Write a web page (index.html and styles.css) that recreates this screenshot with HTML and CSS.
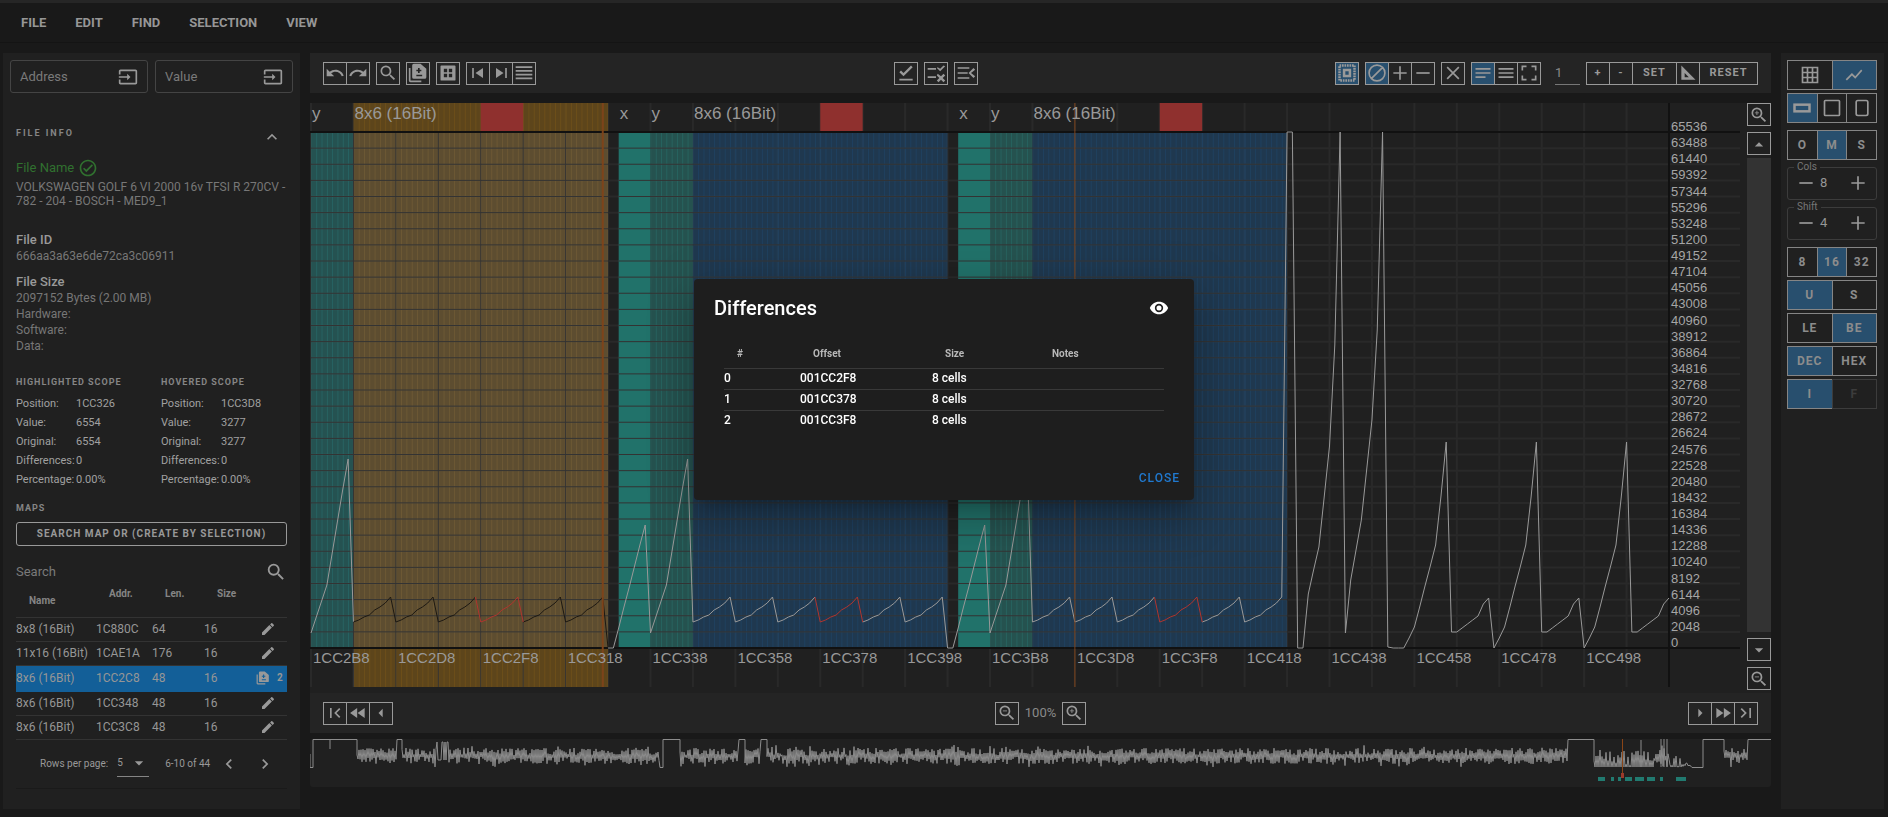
FILE: index.html
```
<!DOCTYPE html>
<html lang="en">
<head>
  <meta charset="UTF-8" />
  <meta name="viewport" content="width=device-width, initial-scale=1.0" />
  <title>Map Editor</title>
  <link rel="stylesheet" href="styles.css">
</head>
<body>
  <!-- Icon set -->
  <svg class="sprite" aria-hidden="true">
    <symbol id="i-input" viewBox="0 0 24 24"><path d="M21,3.01H3C1.89,3.01 1,3.9 1,5V9H3V4.99H21V19.03H3V15H1V19C1,20.1 1.89,21 3,21H21C22.1,21 23,20.11 23,19V5C23,3.9 22.1,3.01 21,3.01M11,16L15,12L11,8V11H1V13H11V16Z"/></symbol>
    <symbol id="i-check" viewBox="0 0 24 24"><path d="M12 2C6.5 2 2 6.5 2 12S6.5 22 12 22 22 17.5 22 12 17.5 2 12 2M12 20C7.59 20 4 16.41 4 12S7.59 4 12 4 20 7.59 20 12 16.41 20 12 20M16.59 7.58L10 14.17L7.41 11.59L6 13L10 17L18 9L16.59 7.58Z"/></symbol>
    <symbol id="i-up" viewBox="0 0 24 24"><path d="M7.41,15.41L12,10.83L16.59,15.41L18,14L12,8L6,14L7.41,15.41Z"/></symbol>
    <symbol id="i-left" viewBox="0 0 24 24"><path d="M15.41,16.58L10.83,12L15.41,7.41L14,6L8,12L14,18L15.41,16.58Z"/></symbol>
    <symbol id="i-right" viewBox="0 0 24 24"><path d="M8.59,16.58L13.17,12L8.59,7.41L10,6L16,12L10,18L8.59,16.58Z"/></symbol>
    <symbol id="i-search" viewBox="0 0 24 24"><path d="M9.5,3A6.5,6.5 0 0,1 16,9.5C16,11.11 15.41,12.59 14.44,13.73L14.71,14H15.5L20.5,19L19,20.5L14,15.5V14.71L13.73,14.44C12.59,15.41 11.11,16 9.5,16A6.5,6.5 0 0,1 3,9.5A6.5,6.5 0 0,1 9.5,3M9.5,5C7,5 5,7 5,9.5C5,12 7,14 9.5,14C12,14 14,12 14,9.5C14,7 12,5 9.5,5Z"/></symbol>
    <symbol id="i-zoomin" viewBox="0 0 24 24"><use href="#i-search"/><path d="M9,7H10V9H12V10H10V12H9V10H7V9H9V7Z"/></symbol>
    <symbol id="i-zoomout" viewBox="0 0 24 24"><use href="#i-search"/><path d="M7,9H12V10H7V9Z"/></symbol>
    <symbol id="i-pencil" viewBox="0 0 24 24"><path d="M20.71,7.04C21.1,6.65 21.1,6 20.71,5.63L18.37,3.29C18,2.9 17.35,2.9 16.96,3.29L15.12,5.12L18.87,8.87M3,17.25V21H6.75L17.81,9.93L14.06,6.18L3,17.25Z"/></symbol>
    <symbol id="i-copy" viewBox="0 0 24 24"><path fill-rule="evenodd" d="M1,6H3V21H16V23H3A2,2 0 0,1 1,21V6M7,1H15L22,7V17A2,2 0 0,1 20,19H7A2,2 0 0,1 5,17V3A2,2 0 0,1 7,1M12,6V8H10V10H12V12H14V10H16V8H14V6H12M10,14V16H17V14H10Z"/></symbol>
    <symbol id="i-undo" viewBox="0 0 24 24"><path d="M12.5,8C9.85,8 7.45,9 5.6,10.6L2,7V16H11L7.38,12.38C8.77,11.22 10.54,10.5 12.5,10.5C16.04,10.5 19.05,12.81 20.1,16L22.47,15.22C21.08,11.03 17.15,8 12.5,8Z"/></symbol>
    <symbol id="i-redo" viewBox="0 0 24 24"><path d="M18.4,10.6C16.55,9 14.15,8 11.5,8C6.85,8 2.92,11.03 1.54,15.22L3.9,16C4.95,12.81 7.95,10.5 11.5,10.5C13.45,10.5 15.23,11.22 16.62,12.38L13,16H22V7L18.4,10.6Z"/></symbol>
    <symbol id="i-table" viewBox="0 0 24 24"><path fill-rule="evenodd" d="M4,3H20A1,1 0 0,1 21,4V20A1,1 0 0,1 20,21H4A1,1 0 0,1 3,20V4A1,1 0 0,1 4,3M7,7V11H11V7H7M13,7V11H17V7H13M7,13V17H11V13H7M13,13V17H17V13H13Z"/></symbol>
    <symbol id="i-prev" viewBox="0 0 24 24"><path d="M5,18V6H7V18H5M9,12L18,6V18L9,12Z"/></symbol>
    <symbol id="i-next" viewBox="0 0 24 24"><path d="M17,18H19V6H17M6,18L15,12L6,6V18Z"/></symbol>
    <symbol id="i-lines" viewBox="0 0 24 24"><path d="M2,4H22V6H2M2,8.500H22V10.500H2M2,13H22V15H2M2,17.500H22V19.500H2Z"/></symbol>
    <symbol id="i-checkline" viewBox="0 0 24 24"><path d="M4,19H20V21H4M9,16L4,11L6,9L9,12L18,3L20,5Z"/></symbol>
    <symbol id="i-checkx" viewBox="0 0 24 24"><path d="M2,6H12V8H2M2,16H12V18H2M17,10L13,6L14,5L17,7L21,3L23,4M14,13L18,16L21,13L23,15L20,18L23,21L21,23L18,20L15,23L13,21L16,18L13,15Z"/></symbol>
    <symbol id="i-collapse" viewBox="0 0 24 24"><path d="M2,5H16V7H2M2,11H14V13H2M2,17H16V19H2M21,6L23,8L18,12L23,16L21,18L15,12Z"/></symbol>
    <symbol id="i-group" viewBox="0 0 24 24"><path fill="none" stroke="currentColor" stroke-width="3" stroke-dasharray="2 1" d="M3,3H21V21H3Z"/><path fill="none" stroke="currentColor" stroke-width="3" d="M8.500,8.500H15.500V15.500H8.500Z"/></symbol>
    <symbol id="i-block" viewBox="0 0 24 24"><path fill="none" stroke="currentColor" stroke-width="2" d="M12,2.500A9.500,9.500 0 1,1 12,21.500A9.500,9.500 0 1,1 12,2.500M5.500,18.500L18.500,5.500"/></symbol>
    <symbol id="i-plus" viewBox="0 0 24 24"><path d="M11,4H13V11H20V13H13V20H11V13H4V11H11Z"/></symbol>
    <symbol id="i-minus" viewBox="0 0 24 24"><path d="M4,11H20V13H4Z"/></symbol>
    <symbol id="i-close" viewBox="0 0 24 24"><path fill="none" stroke="currentColor" stroke-width="2" d="M5,5L19,19M19,5L5,19"/></symbol>
    <symbol id="i-menu" viewBox="0 0 24 24"><path d="M3,6H21V8H3V6M3,11H21V13H3V11M3,16H21V18H3V16Z"/></symbol>
    <symbol id="i-text" viewBox="0 0 24 24"><path d="M3,6H21V8H3V6M3,11H21V13H3V11M3,16H15V18H3V16Z"/></symbol>
    <symbol id="i-corners" viewBox="0 0 24 24"><path fill="none" stroke="currentColor" stroke-width="2" d="M4,9V4H9M15,4H20V9M20,15V20H15M9,20H4V15"/></symbol>
    <symbol id="i-square" viewBox="0 0 24 24"><path fill-rule="evenodd" d="M4,3L21,20H4M8,12V17H13Z"/></symbol>
    <symbol id="i-tri-up" viewBox="0 0 24 24"><path d="M7,15L12,10L17,15H7Z"/></symbol>
    <symbol id="i-tri-down" viewBox="0 0 24 24"><path d="M7,10L12,15L17,10H7Z"/></symbol>
    <symbol id="i-tri-left" viewBox="0 0 24 24"><path d="M14,7L9,12L14,17V7Z"/></symbol>
    <symbol id="i-tri-right" viewBox="0 0 24 24"><path d="M10,17L15,12L10,7V17Z"/></symbol>
    <symbol id="i-rewind" viewBox="0 0 24 24"><path d="M11.5,12L20,18V6M11,18V6L2.500,12L11,18Z"/></symbol>
    <symbol id="i-forward" viewBox="0 0 24 24"><path d="M13,6V18L21.500,12M4,18L12.500,12L4,6V18Z"/></symbol>
    <symbol id="i-first" viewBox="0 0 24 24"><path d="M18.410,16.590L13.820,12L18.410,7.410L17,6L11,12L17,18L18.410,16.590M6,6H8V18H6V6Z"/></symbol>
    <symbol id="i-last" viewBox="0 0 24 24"><path d="M5.590,7.410L10.180,12L5.590,16.590L7,18L13,12L7,6L5.590,7.410M16,6H18V18H16V6Z"/></symbol>
    <symbol id="i-grid" viewBox="0 0 24 24"><path fill="none" stroke="currentColor" stroke-width="2" d="M3,3H21V21H3ZM3,9H21M3,15H21M9,3V21M15,3V21"/></symbol>
    <symbol id="i-chart" viewBox="0 0 24 24"><path d="M3.500,18.500L9.500,12.500L13.500,16.500L22,6.920L20.590,5.500L13.500,13.500L9.500,9.500L2,17L3.500,18.500Z"/></symbol>
    <symbol id="i-wide" viewBox="0 0 24 24"><rect fill="none" stroke="currentColor" stroke-width="3" x="3" y="8" width="18" height="8"/></symbol>
    <symbol id="i-box" viewBox="0 0 24 24"><rect fill="none" stroke="currentColor" stroke-width="2" x="3" y="3" width="18" height="18" rx="1"/></symbol>
    <symbol id="i-tall" viewBox="0 0 24 24"><rect fill="none" stroke="currentColor" stroke-width="2" x="5" y="3" width="14" height="18" rx="2"/></symbol>
    <symbol id="i-eye" viewBox="0 0 24 24"><path d="M12,9A3,3 0 0,0 9,12A3,3 0 0,0 12,15A3,3 0 0,0 15,12A3,3 0 0,0 12,9M12,17A5,5 0 0,1 7,12A5,5 0 0,1 12,7A5,5 0 0,1 17,12A5,5 0 0,1 12,17M12,4.500C7,4.500 2.730,7.610 1,12C2.730,16.390 7,19.500 12,19.500C17,19.500 21.270,16.390 23,12C21.270,7.610 17,4.500 12,4.500Z"/></symbol>
  </svg>

  <nav class="menu">
    <button>FILE</button>
    <button>EDIT</button>
    <button>FIND</button>
    <button>SELECTION</button>
    <button>VIEW</button>
  </nav>

  <div class="app">
    <!-- Sidebar -->
    <aside class="sidebar">
      <div class="jump">
        <div class="jump-field"><input type="text" placeholder="Address" aria-label="Address"><button aria-label="Go to address"><svg class="icon"><use href="#i-input"/></svg></button></div>
        <div class="jump-field"><input type="text" placeholder="Value" aria-label="Value"><button aria-label="Go to value"><svg class="icon"><use href="#i-input"/></svg></button></div>
      </div>

      <div class="info-head">
        <h2>FILE INFO</h2>
        <button aria-label="Collapse"><svg class="icon"><use href="#i-up"/></svg></button>
      </div>
      <section class="info">
        <h3 class="verified">File Name <svg class="icon"><use href="#i-check"/></svg></h3>
        <p class="file-name">VOLKSWAGEN GOLF 6 VI 2000 16v TFSI R 270CV - 782 - 204 - BOSCH - MED9_1</p>
        <h3>File ID</h3>
        <p class="file-id">666aa3a63e6de72ca3c06911</p>
        <h3>File Size</h3>
        <p>2097152 Bytes (2.00 MB)</p>
        <p>Hardware:</p>
        <p>Software:</p>
        <p>Data:</p>
      </section>

      <div class="scopes">
        <section>
          <h2>HIGHLIGHTED SCOPE</h2>
          <dl>
            <dt>Position:</dt><dd>1CC326</dd>
            <dt>Value:</dt><dd>6554</dd>
            <dt>Original:</dt><dd>6554</dd>
            <dt>Differences:</dt><dd>0</dd>
            <dt>Percentage:</dt><dd>0.00%</dd>
          </dl>
        </section>
        <section>
          <h2>HOVERED SCOPE</h2>
          <dl>
            <dt>Position:</dt><dd>1CC3D8</dd>
            <dt>Value:</dt><dd>3277</dd>
            <dt>Original:</dt><dd>3277</dd>
            <dt>Differences:</dt><dd>0</dd>
            <dt>Percentage:</dt><dd>0.00%</dd>
          </dl>
        </section>
      </div>

      <section class="maps">
        <h2>MAPS</h2>
        <button class="map-search">SEARCH MAP OR (CREATE BY SELECTION)</button>
        <div class="search"><input type="text" placeholder="Search" aria-label="Search"><svg class="icon"><use href="#i-search"/></svg></div>
        <table class="map-table">
          <thead>
            <tr><th class="col-name">Name</th><th class="col-addr">Addr.</th><th class="col-len">Len.</th><th class="col-size">Size</th><th></th></tr>
          </thead>
          <tbody>
            <tr><td>8x8 (16Bit)</td><td>1C880C</td><td>64</td><td>16</td><td class="act"><svg class="icon"><use href="#i-pencil"/></svg></td></tr>
            <tr><td>11x16 (16Bit)</td><td>1CAE1A</td><td>176</td><td>16</td><td class="act"><svg class="icon"><use href="#i-pencil"/></svg></td></tr>
            <tr class="selected"><td>8x6 (16Bit)</td><td>1CC2C8</td><td>48</td><td>16</td><td class="act"><svg class="icon"><use href="#i-copy"/></svg><b>2</b></td></tr>
            <tr><td>8x6 (16Bit)</td><td>1CC348</td><td>48</td><td>16</td><td class="act"><svg class="icon"><use href="#i-pencil"/></svg></td></tr>
            <tr><td>8x6 (16Bit)</td><td>1CC3C8</td><td>48</td><td>16</td><td class="act"><svg class="icon"><use href="#i-pencil"/></svg></td></tr>
          </tbody>
        </table>
        <div class="pager">
          <label for="rows">Rows per page:</label>
          <div class="rows"><select id="rows"><option>5</option><option>10</option></select><svg class="icon"><use href="#i-tri-down"/></svg></div>
          <span class="range">6-10 of 44</span>
          <button aria-label="Previous page"><svg class="icon"><use href="#i-left"/></svg></button>
          <button aria-label="Next page"><svg class="icon"><use href="#i-right"/></svg></button>
        </div>
      </section>
    </aside>

    <!-- Editor -->
    <main class="editor">
      <div class="bar">
        <div class="tools">
          <div class="group"><button aria-label="Undo"><svg class="icon"><use href="#i-undo"/></svg></button><button aria-label="Redo"><svg class="icon"><use href="#i-redo"/></svg></button></div>
          <div class="group"><button aria-label="Find"><svg class="icon"><use href="#i-search"/></svg></button></div>
          <div class="group"><button aria-label="Copy map"><svg class="icon"><use href="#i-copy"/></svg></button></div>
          <div class="group"><button aria-label="Table"><svg class="icon"><use href="#i-table"/></svg></button></div>
          <div class="group"><button aria-label="Previous"><svg class="icon"><use href="#i-prev"/></svg></button><button aria-label="Next"><svg class="icon"><use href="#i-next"/></svg></button><button aria-label="List"><svg class="icon"><use href="#i-lines"/></svg></button></div>
        </div>
        <div class="tools">
          <div class="group"><button aria-label="Apply"><svg class="icon"><use href="#i-checkline"/></svg></button></div>
          <div class="group"><button aria-label="Differences"><svg class="icon"><use href="#i-checkx"/></svg></button></div>
          <div class="group"><button aria-label="Collapse"><svg class="icon"><use href="#i-collapse"/></svg></button></div>
        </div>
        <div class="tools">
          <div class="group"><button class="on" aria-label="Select group"><svg class="icon"><use href="#i-group"/></svg></button></div>
          <div class="group"><button class="on" aria-label="None"><svg class="icon"><use href="#i-block"/></svg></button><button aria-label="Add"><svg class="icon"><use href="#i-plus"/></svg></button><button aria-label="Subtract"><svg class="icon"><use href="#i-minus"/></svg></button></div>
          <div class="group"><button aria-label="Clear"><svg class="icon"><use href="#i-close"/></svg></button></div>
          <div class="group"><button class="on" aria-label="Align"><svg class="icon"><use href="#i-text"/></svg></button><button aria-label="Lines"><svg class="icon"><use href="#i-menu"/></svg></button><button aria-label="Full"><svg class="icon"><use href="#i-corners"/></svg></button></div>
          <input class="step" type="text" value="1" aria-label="Step">
          <div class="group"><button>+</button><button>-</button><button class="set">SET</button><button aria-label="Slope"><svg class="icon"><use href="#i-square"/></svg></button><button class="reset">RESET</button></div>
        </div>
      </div>

      <div class="view">
        <div class="chart" id="chart"></div>
        <div class="scroll">
          <button aria-label="Zoom in"><svg class="icon"><use href="#i-zoomin"/></svg></button>
          <button aria-label="Up"><svg class="icon"><use href="#i-tri-up"/></svg></button>
          <div class="track"></div>
          <button aria-label="Down"><svg class="icon"><use href="#i-tri-down"/></svg></button>
          <button aria-label="Zoom out"><svg class="icon"><use href="#i-zoomout"/></svg></button>
        </div>
      </div>

      <div class="bar">
        <div class="tools"><div class="group"><button aria-label="First"><svg class="icon"><use href="#i-first"/></svg></button><button aria-label="Rewind"><svg class="icon"><use href="#i-rewind"/></svg></button><button aria-label="Back"><svg class="icon"><use href="#i-tri-left"/></svg></button></div></div>
        <div class="tools zoom"><div class="group"><button aria-label="Zoom out"><svg class="icon"><use href="#i-zoomout"/></svg></button></div><span>100%</span><div class="group"><button aria-label="Zoom in"><svg class="icon"><use href="#i-zoomin"/></svg></button></div></div>
        <div class="tools"><div class="group"><button aria-label="Step forward"><svg class="icon"><use href="#i-tri-right"/></svg></button><button aria-label="Forward"><svg class="icon"><use href="#i-forward"/></svg></button><button aria-label="Last"><svg class="icon"><use href="#i-last"/></svg></button></div></div>
      </div>

      <div class="minimap" id="minimap"></div>
    </main>

    <!-- Display options -->
    <aside class="options">
      <div class="seg"><button aria-label="Grid"><svg class="icon"><use href="#i-grid"/></svg></button><button class="on" aria-label="Graph"><svg class="icon"><use href="#i-chart"/></svg></button></div>
      <div class="seg"><button class="on" aria-label="Wide"><svg class="icon"><use href="#i-wide"/></svg></button><button aria-label="Square"><svg class="icon"><use href="#i-box"/></svg></button><button aria-label="Tall"><svg class="icon"><use href="#i-tall"/></svg></button></div>
      <div class="seg spaced"><button>O</button><button class="on">M</button><button>S</button></div>
      <fieldset>
        <legend>Cols</legend>
        <button aria-label="Fewer columns"><svg class="icon"><use href="#i-minus"/></svg></button><span>8</span><button class="more" aria-label="More columns"><svg class="icon"><use href="#i-plus"/></svg></button>
      </fieldset>
      <fieldset>
        <legend>Shift</legend>
        <button aria-label="Shift left"><svg class="icon"><use href="#i-minus"/></svg></button><span>4</span><button class="more" aria-label="Shift right"><svg class="icon"><use href="#i-plus"/></svg></button>
      </fieldset>
      <div class="seg spaced"><button>8</button><button class="on">16</button><button>32</button></div>
      <div class="seg"><button class="on">U</button><button>S</button></div>
      <div class="seg"><button>LE</button><button class="on">BE</button></div>
      <div class="seg"><button class="on">DEC</button><button>HEX</button></div>
      <div class="seg"><button class="on">I</button><button disabled>F</button></div>
    </aside>
  </div>

  <!-- Differences dialog -->
  <div class="overlay">
    <div class="dialog" role="dialog" aria-labelledby="dlgTitle">
      <div class="dialog-head">
        <h1 id="dlgTitle">Differences</h1>
        <button aria-label="Show"><svg class="icon"><use href="#i-eye"/></svg></button>
      </div>
      <table class="diff-table">
        <thead>
          <tr><th class="col-n">#</th><th class="col-off">Offset</th><th class="col-cells">Size</th><th>Notes</th></tr>
        </thead>
        <tbody>
          <tr><td>0</td><td>001CC2F8</td><td>8 cells</td><td></td></tr>
          <tr><td>1</td><td>001CC378</td><td>8 cells</td><td></td></tr>
          <tr><td>2</td><td>001CC3F8</td><td>8 cells</td><td></td></tr>
        </tbody>
      </table>
      <div class="dialog-foot"><button>CLOSE</button></div>
    </div>
  </div>

  <script src="chart.js"></script>
</body>
</html>
```

FILE: styles.css
```
* { box-sizing: border-box; }
body { margin: 0; min-height: 100vh; display: flex; flex-direction: column; background: #191919; border-top: 3px solid #262626; color: #8a8a8a; font: 12px/16px Roboto, sans-serif; }
h1, h2, h3, p, dl, dd { margin: 0; }
button, input, select { font: inherit; color: inherit; background: none; border: 0; padding: 0; margin: 0; outline: 0; }
button { display: flex; align-items: center; justify-content: center; }
.sprite { position: absolute; width: 0; height: 0; }
.icon { width: 20px; height: 20px; fill: currentColor; color: #999; flex: none; display: block; }

.menu { display: flex; gap: 29px; height: 40px; padding: 0 21px; align-items: center; border-bottom: 1px solid #141414; }
.menu button { font-size: 13px; font-weight: 700; color: #969696; }
.app { flex: 1; display: flex; gap: 10px; padding: 10px 4px 8px 3px; }

/* sidebar */
.sidebar { width: 297px; flex: none; background: #202020; padding: 7px; }
.sidebar h2 { font-size: 9px; line-height: 12px; font-weight: 700; letter-spacing: 1px; color: #858585; }
.jump { display: flex; gap: 7px; }
.jump-field { flex: 1; min-width: 0; display: flex; align-items: center; height: 33px; border: 1px solid #444; border-radius: 3px; padding: 0 9px; }
.jump-field input { flex: 1; min-width: 0; font-size: 13px; }
input::placeholder { color: #7a7a7a; opacity: 1; }
.info-head { display: flex; justify-content: space-between; align-items: flex-start; height: 59px; padding: 34px 11px 0 6px; }
.sidebar .info-head h2 { letter-spacing: 2px; }
.info { padding: 6px 6px 0; color: #777; }
.info h3 { font-size: 13px; font-weight: 500; line-height: 16px; color: #999; }
.info .verified { display: flex; align-items: center; gap: 4px; font-weight: 400; line-height: 18px; color: #30702f; }
.verified .icon { color: #30702f; }
.info .file-name { line-height: 14px; padding: 2px 0 24px; }
.info .file-id { margin-bottom: 10px; }
.scopes { display: flex; padding: 22px 6px 0; }
.scopes section { width: 145px; flex: none; }
.scopes section + section { width: 126px; }
.scopes dl { display: grid; grid-template-columns: 60px 1fr; font-size: 11px; line-height: 19px; padding-top: 6px; color: #a0a0a0; }
.scopes dt { white-space: nowrap; }
.maps { margin: 13px 6px 0; }
.map-search { width: 100%; height: 24px; margin-top: 8px; border: 1px solid #999; border-radius: 3px; color: #999; font-size: 10px; font-weight: 700; letter-spacing: 1px; }
.search { display: flex; align-items: center; height: 40px; padding-top: 12px; }
.search input { flex: 1; min-width: 0; font-size: 13px; }
.search .icon { width: 22px; height: 22px; }
table { width: 100%; border-collapse: collapse; table-layout: fixed; }
th { text-align: left; font-size: 10px; line-height: 14px; font-weight: 700; padding: 0 0 0 13px; }
td { padding: 0; white-space: nowrap; }
.map-table { color: #969696; }
.map-table th { height: 31px; vertical-align: top; padding-top: 1px; color: #858585; border-bottom: 1px solid #333; }
.map-table .col-name { width: 80px; padding-top: 8px; }
.col-addr { width: 56px; }
.col-len { width: 52px; }
.col-size { width: 44px; }
.map-table td { height: 24px; border-bottom: 1px solid #333; }
.map-table .selected td { height: 26px; background: #135f98; border-color: #135f98; }
.map-table .act .icon { display: inline-block; width: 16px; height: 16px; margin-left: 12px; vertical-align: middle; }
.map-table .selected .act .icon { width: 14px; height: 14px; margin-left: 8px; }
.act b { font-size: 10px; margin-left: 7px; vertical-align: middle; }
.pager { display: flex; align-items: center; height: 49px; padding: 0 12px 0 24px; font-size: 10px; color: #999; border-bottom: 1px solid #1a1a1a; white-space: nowrap; }
.rows { display: flex; align-items: center; width: 32px; height: 27px; margin: 0 16px 0 9px; border-bottom: 1px solid #858585; }
.rows select { appearance: none; width: 12px; }
.range { flex: 1; }
.pager button + button { margin-left: 16px; }

/* editor */
.editor { flex: 1; min-width: 0; display: flex; flex-direction: column; margin-bottom: 22px; }
.bar { display: flex; justify-content: space-between; align-items: center; height: 40px; background: #242424; padding: 0 13px; }
.tools { display: flex; gap: 6px; align-items: center; }
.group { display: flex; }
.group button, .scroll button { width: 24px; height: 23px; border: 1px solid #999; color: #999; font-size: 11px; font-weight: 700; letter-spacing: 1px; }
.group button + button { margin-left: -1px; }
.group .set { width: 45px; }
.group .reset { width: 59px; }
.on { background: #284f6e; }
.step { width: 25px; height: 23px; margin-left: 8px; font-size: 13px; border-bottom: 1px solid #777; }
.zoom { font-size: 13px; }
.view { flex: 1; display: flex; gap: 7px; margin-top: 10px; background: #202020; }
.chart { flex: 1; min-width: 0; height: 590px; }
.scroll { display: flex; flex-direction: column; gap: 6px; padding-bottom: 3px; }
.track { flex: 1; background: #333; margin-top: -3px; }
.minimap { height: 48px; margin-top: 6px; background: #202020; border-radius: 3px; }
.chart svg, .minimap svg { display: block; font-family: "Liberation Sans", Arial, sans-serif; fill: #999; }
.map-label { font-size: 17px; }
.x-label { font-size: 15px; }
.y-label { font-size: 13px; fill: #a6a6a6; }
.grid { stroke: #292929; stroke-width: 2; fill: none; }
.grid-over { stroke: #333; stroke-width: 1; fill: none; }
.axis { stroke: #111; stroke-width: 2; fill: none; }
.trace { stroke: #999; stroke-width: 1; fill: none; }
.trace.dark { stroke: #1c1812; }
.trace.changed { stroke: #b0342e; }
.cursor { stroke: #7d431a; stroke-width: 1; }
.cursor.wide { stroke-width: 2; }
.overview { stroke: #8c8c8c; stroke-width: 1; fill: none; }

/* options */
.options { width: 103px; background: #202020; padding: 7px 7px 7px 6px; display: flex; flex-direction: column; gap: 3px; }
.seg { display: flex; height: 30px; }
.seg.spaced { margin-top: 4px; }
.seg button { flex: 1 1 0; border: 1px solid #858585; color: #8c8c8c; font-size: 12px; font-weight: 700; letter-spacing: 1px; }
.seg button + button { margin-left: -1px; }
.seg button:disabled { border-color: #3c3c3c; color: #3c3c3c; }
.options fieldset { display: flex; align-items: center; height: 37px; min-width: 0; margin: 0; padding: 2px 8px 0; border: 1px solid #3c3c3c; border-radius: 3px; color: #969696; font-size: 13px; }
.options legend { font-size: 10px; line-height: 8px; padding: 0 3px; margin-left: -2px; color: #777; }
.options .more { margin-left: auto; }
.options fieldset span { margin-left: 4px; }

/* dialog */
.overlay { position: fixed; inset: 0; display: flex; align-items: center; justify-content: center; }
.dialog { width: 500px; max-width: 100%; height: 221px; margin-bottom: 38px; display: flex; flex-direction: column; background: #1e1e1e; border-radius: 4px; color: #fff; box-shadow: 0 11px 15px -7px rgba(0,0,0,.2), 0 24px 38px 3px rgba(0,0,0,.14), 0 9px 46px 8px rgba(0,0,0,.12); }
.dialog-head { display: flex; justify-content: space-between; align-items: center; padding: 13px 25px 0 20px; }
.dialog h1 { font-size: 20px; line-height: 32px; font-weight: 500; }
.dialog-head .icon { color: #fff; }
.diff-table { width: auto; margin: 19px 30px 0; }
.diff-table th { height: 25px; vertical-align: top; padding-top: 4px; color: #b8b8b8; border-bottom: 1px solid #393939; }
.diff-table td { height: 21px; padding-bottom: 2px; font-weight: 500; }
.diff-table tr + tr td { border-top: 1px solid #393939; }
.col-n { width: 76px; }
.col-off { width: 132px; }
.col-cells { width: 107px; }
.dialog-foot { display: flex; justify-content: flex-end; margin-top: auto; padding: 0 14px 14px; }
.dialog-foot button { color: #2079cf; font-weight: 500; letter-spacing: 1px; }
```

FILE: chart.js
```
const CELLS = 256;
const START = 0x1CC2B8;
const TOP = 29;
const FLOOR = 545;

// every value is a height in the plot, 0 at the top line and 516 at zero
const row = [490, 488, 485, 483, 478, 475, 471, 465];
const yAxis = [501, 485, 469, 453, 421, 389, 357, 327];
const xAxis = [496, 475, 455, 434, 413, 393];
const values = [];
function push(list) { list.forEach(v => values.push(v)); }
function rows() { for (let r = 0; r < 6; r++) push(row); }

push(yAxis);
rows();
for (let m = 0; m < 2; m++) {
  push([516, 516]);
  push(xAxis);
  push(yAxis);
  rows();
}
push([0, 0, 516, 516, 462, 438, 415, 365, 314, 213, 0, 501, 448, 418, 388, 338, 288, 198, 0, 515, 516, 516, 516]);
const wave = [506, 495, 475, 454, 434, 413, 365, 310, 500, 500, 496, 492, 488, 484, 472, 466, 516];
while (values.length <= CELLS) push(wave);

function rect(x, y, w, h, fill, opacity) {
  return `<rect x="${x}" y="${y}" width="${w}" height="${h}" fill="${fill}" opacity="${opacity || 1}"/>`;
}

function drawChart() {
  const box = document.getElementById('chart');
  const width = box.clientWidth;
  const height = box.clientHeight;
  const bottom = height - 6;
  const right = width - 71;
  const cell = (right - 1) / CELLS;
  const px = i => 1 + i * cell;
  const py = i => TOP + values[i];
  let out = '';

  // grid
  let grid = '';
  let lines = '';
  for (let i = 0; i < CELLS; i += 8) grid += `M${px(i)},0V${bottom}`;
  for (let i = 0; i <= 32; i++) lines += `M1,${TOP + i * 516 / 32}H${width}`;
  out += `<path class="grid" d="${grid}"/>`;
  out += `<path class="grid" d="${lines}"/>`;

  // one translucent bar per cell, neighbours overlap a little
  function band(from, to, y, h, fill, opacity) {
    for (let i = from; i < to; i++) {
      const last = i === to - 1;
      out += rect(px(i), y, last ? cell : cell + 0.8, h, fill, opacity);
    }
  }
  band(0, 8, TOP, 516, '#2a7573', 0.6);
  band(8, 56, 0, TOP, '#785519', 0.7);
  band(8, 56, TOP, 516, '#786137', 0.7);
  band(8, 56, FLOOR, bottom - FLOOR, '#785519', 0.7);
  [58, 122].forEach(i => {
    out += rect(px(i), TOP, cell * 6, 516, '#21726a');
    band(i + 6, i + 14, TOP, 516, '#2a7570', 0.6);
    band(i + 14, i + 62, TOP, 516, '#1f4a70', 0.6);
  });
  [32, 96, 160].forEach(i => { out += rect(px(i), 0, cell * 8, TOP, '#8f302e'); });

  // horizontal lines show through the maps only
  let over = '';
  for (let i = 1; i < 32; i++) {
    const y = TOP + i * 516 / 32;
    over += `M1,${y}H${px(56)}M${px(58)},${y}H${px(120)}M${px(122)},${y}H${px(184)}`;
  }
  for (let i = 8; i < 56; i += 8) over += `M${px(i)},${TOP}V${bottom}`;
  out += `<path class="grid-over" d="${over}"/>`;
  out += `<path class="axis" d="M0,${TOP}H${width}M0,${FLOOR}H${width}M${right},0V${bottom}"/>`;

  // traces
  function trace(from, to, cls) {
    let d = '';
    for (let i = from; i <= to; i++) d += (i === from ? 'M' : 'L') + px(i) + ',' + py(i);
    out += `<path class="trace ${cls}" d="${d}"/>`;
  }
  trace(0, 8, '');
  trace(8, 31, 'dark');
  trace(40, 56, 'dark');
  trace(56, 95, '');
  trace(104, 159, '');
  trace(168, 256, '');
  [31, 95, 159].forEach(i => trace(i, i + 9, 'changed'));

  // cursors
  out += `<line class="cursor wide" x1="${px(55)}" x2="${px(55)}" y1="0" y2="${bottom}"/>`;
  out += `<line class="cursor" x1="${px(144)}" x2="${px(144)}" y1="0" y2="${bottom}"/>`;

  // labels
  const text = (x, y, cls, str) => { out += `<text class="${cls}" x="${x}" y="${y}">${str}</text>`; };
  text(px(0) + 1, 16, 'map-label', 'y');
  text(px(8) + 1, 16, 'map-label', '8x6 (16Bit)');
  [58, 122].forEach(i => {
    text(px(i) + 1, 16, 'map-label', 'x');
    text(px(i + 6) + 1, 16, 'map-label', 'y');
    text(px(i + 14) + 1, 16, 'map-label', '8x6 (16Bit)');
  });
  for (let i = 0; i < CELLS; i += 16) {
    text(px(i) + 2, 560, 'x-label', (START + i * 2).toString(16).toUpperCase());
  }
  for (let i = 0; i <= 32; i++) {
    text(right + 2, TOP - 1 + i * 516 / 32, 'y-label', 65536 - i * 2048);
  }

  box.innerHTML = `<svg width="${width}" height="${height}">${out}</svg>`;
}

// whole file overview: [end, kind] with end as a share of 1461
const parts = [
  [3, 'low'], [47, 'high'], [87, 'noise'], [92, 'high'], [127, 'noise'], [139, 'spike'], [350, 'noise'], [353, 'low'], [370, 'high'],
  [429, 'noise'], [435, 'high'], [451, 'noise'], [457, 'high'], [500, 'wild'], [530, 'noise'], [550, 'wild'], [640, 'noise'], [650, 'wild'],
  [1258, 'noise'], [1284, 'high'], [1345, 'spiky'], [1360, 'wild'], [1372, 'spiky'], [1382, 'flat'], [1393, 'low'],
  [1414, 'high'], [1438, 'noise'], [1461, 'high']
];

function drawMinimap() {
  const box = document.getElementById('minimap');
  const width = box.clientWidth;
  const k = width / 1461;
  let seed = 7;
  const rnd = () => { seed = (seed * 16807) % 2147483647; return seed / 2147483647; };
  let d = 'M0,15';
  let x = 0;
  let side = 1;
  parts.forEach(([end, kind]) => {
    if (kind === 'high' || kind === 'low') {
      const y = kind === 'high' ? 0.5 : 28.5;
      d += `L${x * k},${y}L${end * k},${y}`;
      x = end;
      return;
    }
    while (x < end) {
      side = -side;
      let y = 17 + side * (1 + rnd() * 7);
      if (rnd() > 0.93) y += side * 3;
      if (kind === 'wild') y = 17 + side * rnd() * 11;
      if (kind === 'spike') y = rnd() > 0.5 ? 3 : 21;
      if (kind === 'spiky') y = side > 0 ? 28 : 11 + rnd() * 17;
      if (kind === 'flat') y = 24 + rnd() * 4;
      d += `L${(x * k).toFixed(1)},${y.toFixed(1)}`;
      x += 1;
    }
    x = end;
  });
  let out = `<path class="overview" d="${d}"/>`;
  out += `<path class="overview" d="M${20 * k},0V10M${1331 * k},1V28M${1351 * k},0V28M${1354 * k},0V28M${1357 * k},0V28"/>`;
  [[1288, 7], [1301, 3], [1308, 3], [1315, 7], [1325, 9], [1337, 8], [1350, 3], [1366, 10]].forEach(([bx, bw]) => {
    out += rect(bx * k, 38, bw * k, 4, '#217a70');
  });
  out += rect(1312 * k, 0, 1, 38, '#8a4517') + rect(1311 * k, 34, 3, 5, '#9c3a2c');
  box.innerHTML = `<svg width="${width}" height="48">${out}</svg>`;
}

function draw() {
  drawChart();
  drawMinimap();
}
draw();
window.addEventListener('resize', draw);
```
